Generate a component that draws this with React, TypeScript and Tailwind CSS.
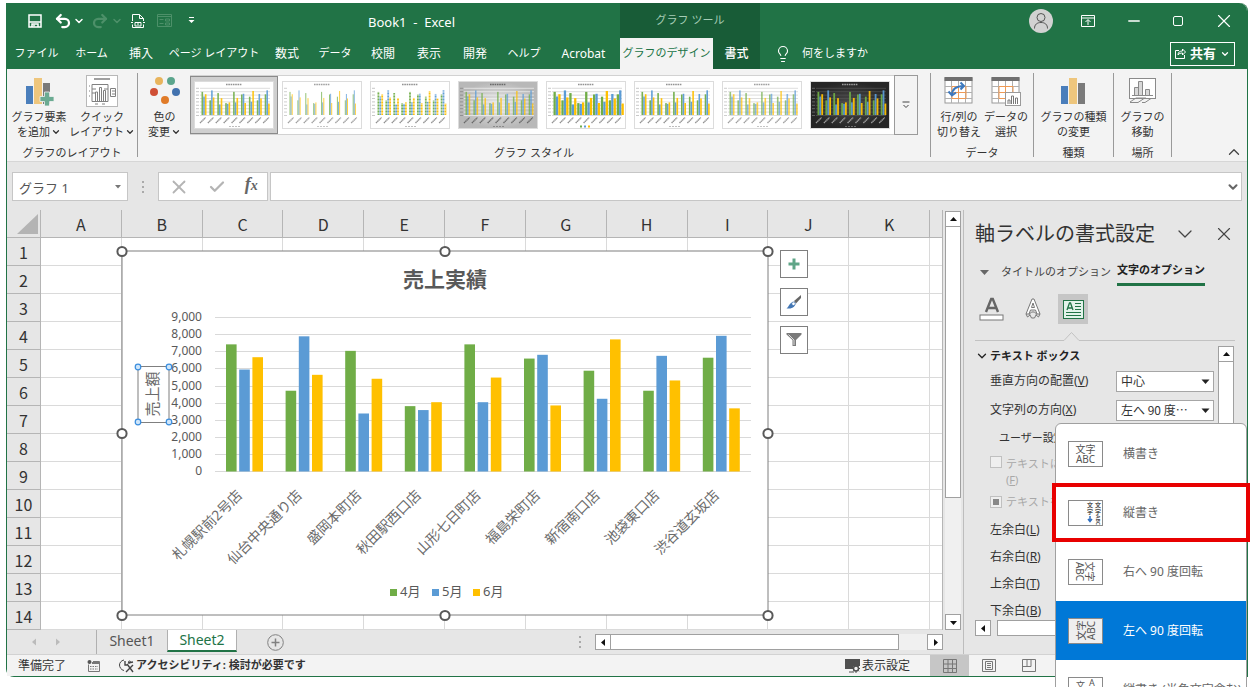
import React, { useState } from 'react';
import { ChevronDown, ChevronUp, Undo2, Redo2, X, Check, Minus, Lightbulb } from 'lucide-react';

type Store = {
  name: string;
  values: [number, number, number];
};

const stores: Store[] = [
  { name: '札幌駅前2号店', values: [7430, 5960, 6680] },
  { name: '仙台中央通り店', values: [4720, 7900, 5650] },
  { name: '盛岡本町店', values: [7050, 3390, 5420] },
  { name: '秋田駅西口店', values: [3820, 3590, 4050] },
  { name: '山形七日町店', values: [7430, 4050, 5490] },
  { name: '福島栄町店', values: [6600, 6820, 3860] },
  { name: '新宿南口店', values: [5890, 4250, 7720] },
  { name: '池袋東口店', values: [4720, 6760, 5320] },
  { name: '渋谷道玄坂店', values: [6650, 7930, 3690] },
];

const series = [
  { name: '4月', color: '#70ad47', x: 268 },
  { name: '5月', color: '#5b9bd5', x: 310 },
  { name: '6月', color: '#ffc000', x: 351 },
];

const menuTabs = [
  { label: 'ファイル', width: 'w-[57px] text-[11px]' },
  { label: 'ホーム', width: 'w-[53px] text-[11px]' },
  { label: '挿入', width: 'w-[46px] text-xs' },
  { label: 'ページ レイアウト', width: 'w-[100px] text-[11px]' },
  { label: '数式', width: 'w-[46px] text-xs' },
  { label: 'データ', width: 'w-[50px] text-[11px]' },
  { label: '校閲', width: 'w-[46px] text-xs' },
  { label: '表示', width: 'w-[46px] text-xs' },
  { label: '開発', width: 'w-[46px] text-xs' },
  { label: 'ヘルプ', width: 'w-[52px] text-[11px]' },
  { label: 'Acrobat', width: 'w-[67px] text-xs' },
];

const columns = ['A', 'B', 'C', 'D', 'E', 'F', 'G', 'H', 'I', 'J', 'K'];
const rows = Array.from({ length: 14 }, (_, i) => i + 1);

type ThumbStyle = {
  bg: string;
  grid: string;
  ink: string;
  barWidth: number;
  opacity: number;
  dashed?: boolean;
  legend?: boolean;
};

const thumbStyles: ThumbStyle[] = [
  { bg: '#ffffff', grid: '#cfcfcf', ink: '#777777', barWidth: 1.9, opacity: 0.9 },
  { bg: '#ffffff', grid: '#ffffff', ink: '#8a8a8a', barWidth: 1.3, opacity: 0.75 },
  { bg: '#ffffff', grid: '#ffffff', ink: '#777777', barWidth: 2.1, opacity: 0.95, dashed: true },
  { bg: 'url(#thumb-silver)', grid: '#f0f0f0', ink: '#555555', barWidth: 1.8, opacity: 0.75 },
  { bg: '#ffffff', grid: '#cccccc', ink: '#777777', barWidth: 2.6, opacity: 1, legend: true },
  { bg: '#ffffff', grid: '#d8d8d8', ink: '#777777', barWidth: 1.9, opacity: 0.95 },
  { bg: '#ffffff', grid: '#d0d0d0', ink: '#888888', barWidth: 1.9, opacity: 0.7 },
  { bg: 'url(#thumb-dark)', grid: '#555555', ink: '#bbbbbb', barWidth: 2.1, opacity: 0.95 },
];

function StyleThumb({ style }: { style: ThumbStyle }) {
  return (
    <svg viewBox="0 0 80 48" className="block h-12 w-20" aria-hidden="true">
      <defs>
        <radialGradient id="thumb-silver">
          <stop offset="0" stopColor="#e8e8e8" />
          <stop offset="1" stopColor="#b8b8b8" />
        </radialGradient>
        <radialGradient id="thumb-dark">
          <stop offset="0" stopColor="#4c4c4c" />
          <stop offset="1" stopColor="#262626" />
        </radialGradient>
      </defs>
      <rect x="0.5" y="0.5" width="79" height="47" fill={style.bg} stroke="#dcdcdc" />
      <path d="M32 3.5h16" stroke={style.ink} strokeWidth="1.6" strokeDasharray="1.6 0.7" opacity="0.8" />
      {[0, 1, 2, 3, 4, 5, 6, 7, 8].map((n) => (
        <g key={n}>
          <path d={`M6 ${34.5 - n * 3.4}h70`} stroke={style.grid} strokeWidth="0.7" />
          <path d={`M2 ${34.5 - n * 3.4}h3`} stroke={style.ink} strokeWidth="0.8" opacity="0.5" />
        </g>
      ))}
      {stores.map((store, i) => (
        <g key={store.name}>
          {store.values.map((value, k) => {
            const height = (value / 9000) * 28;
            return (
              <rect
                key={k}
                x={7.5 + i * 7.9 + k * (style.barWidth - 0.2)}
                y={34 - height}
                width={style.barWidth - 0.3}
                height={height}
                fill={series[k].color}
                opacity={style.opacity}
              />
            );
          })}
          <path d={`M${6 + i * 7.9} 42l5.5-5.5`} stroke={style.ink} strokeWidth="1.4" strokeDasharray="1.4 0.4" opacity="0.8" />
        </g>
      ))}
      {style.dashed &&
        [0, 1, 2, 3, 4, 5, 6, 7, 8].map((n) => (
          <path key={n} d={`M6 ${32 - n * 3}h70`} stroke="#ffffff" strokeWidth="0.8" />
        ))}
      {style.legend ? (
        <g>
          <rect x="34" y="44.5" width="2" height="2" fill="#70ad47" />
          <rect x="38" y="44.5" width="2" height="2" fill="#5b9bd5" />
          <rect x="42" y="44.5" width="2" height="2" fill="#ffc000" />
        </g>
      ) : (
        <path d="M35 45.5h11" stroke={style.ink} strokeWidth="0.8" strokeDasharray="2 1" opacity="0.6" />
      )}
    </svg>
  );
}

function SalesChart() {
  const handles = [
    [0, 0], [323, 0], [646, 0], [0, 182], [646, 182], [0, 364], [323, 364], [646, 364],
  ];
  const axisHandles = [[16, 116], [47, 116], [16, 171], [47, 171]];

  return (
    <svg
      viewBox="0 0 646 364"
      className="block h-[364px] w-[646px] overflow-visible font-['Noto_Sans','Noto_Sans_CJK_JP',sans-serif]"
      role="img"
      aria-label="売上実績"
    >
      <rect x="0" y="0" width="646" height="364" fill="#ffffff" stroke="#7f7f7f" />
      <text x="323" y="36" textAnchor="middle" fontSize="21" fontWeight="700" fill="#595959">売上実績</text>

      {Array.from({ length: 10 }, (_, n) => {
        const y = Math.round(220 - n * 17.1);
        return (
          <g key={n}>
            <path d={`M93 ${y + 0.5}h536`} stroke="#d9d9d9" />
            <text x="80" y={y + 4} textAnchor="end" fontSize="12" fill="#595959">
              {n === 0 ? '0' : `${n},000`}
            </text>
          </g>
        );
      })}

      {stores.map((store, i) => {
        const left = 104 + i * 59.6;
        return (
          <g key={store.name}>
            {store.values.map((value, k) => {
              const height = (value / 9000) * 154;
              return (
                <rect key={k} x={left + k * 13.2} y={220.5 - height} width="10.6" height={height} fill={series[k].color} />
              );
            })}
            <text
              x={left + 17}
              y="245"
              textAnchor="end"
              fontSize="14"
              fill="#6b6b6b"
              transform={`rotate(-45 ${left + 17} 245)`}
            >
              {store.name}
            </text>
          </g>
        );
      })}

      {series.map((item) => (
        <g key={item.name}>
          <rect x={item.x} y="338" width="7" height="7" fill={item.color} />
          <text x={item.x + 10} y="345" fontSize="13" fill="#595959">{item.name}</text>
        </g>
      ))}

      <rect x="16" y="115.5" width="31" height="56" fill="none" stroke="#7f7f7f" />
      <text x="36" y="143" textAnchor="middle" fontSize="15" fill="#6b6b6b" transform="rotate(-90 36 143)">売上額</text>
      {axisHandles.map(([x, y]) => (
        <circle key={`${x}-${y}`} cx={x} cy={y} r="2.8" fill="#cfe6fa" stroke="#3b8ede" strokeWidth="1.2" />
      ))}
      {handles.map(([x, y]) => (
        <circle key={`${x}-${y}`} cx={x} cy={y + 0.5} r="4.6" fill="#ffffff" stroke="#595959" strokeWidth="2" />
      ))}
    </svg>
  );
}

function RibbonButton({ icon, lines, arrow, width }: { icon: React.ReactNode; lines: [string, string]; arrow?: boolean; width: string }) {
  return (
    <button className={`flex shrink-0 flex-col items-center text-[11px] leading-[15px] whitespace-nowrap text-[#333] ${width}`}>
      <span className="mb-0.5 flex h-8 items-center">{icon}</span>
      <span>{lines[0]}</span>
      <span className="flex items-center">
        {lines[1]}
        {arrow && <ChevronDown className="ml-px size-2.5" strokeWidth={3} />}
      </span>
    </button>
  );
}

function RibbonGroup({ label, width, children }: { label: string; width: string; children: React.ReactNode }) {
  return (
    <>
      <div className={`flex shrink-0 flex-col pt-1.5 ${width}`}>
        <div className="flex flex-1 justify-center">{children}</div>
        <div className="flex h-[15px] items-center justify-center text-[11px] whitespace-nowrap text-[#333]">{label}</div>
      </div>
      <div className="my-1 w-px shrink-0 bg-[#9a9a9a]"></div>
    </>
  );
}

function BarsIcon({ plus }: { plus?: boolean }) {
  return (
    <svg width="30" height="30" viewBox="0 0 30 30">
      <rect x="2" y="10" width="7" height="18" fill="#4a7ebb" />
      <rect x="10" y="2" width="8" height="26" fill="#eec67d" />
      <rect x="19" y="7" width="7" height="21" fill="#7a7a7a" />
      {plus && (
        <path d="M20.500 16h5v4.500h4.500v5h-4.500V30h-5v-4.500H16v-5h4.500z" fill="#6bab92" stroke="#f3f3f3" strokeWidth="0.800" />
      )}
    </svg>
  );
}

function QuickLayoutIcon() {
  return (
    <svg width="32" height="32" viewBox="0 0 32 32" fill="none" stroke="#808080">
      <rect x="0.500" y="0.500" width="31" height="31" fill="#fff" stroke="#b8b8b8" />
      <path d="M8 4h16" stroke="#a0a0a0" strokeWidth="2" />
      <path d="M6 9.500h16M6 9.500v17h16v-17M6 14h4M18 14h4M6 18h3M3 11h1M3 16h1M3 21h1" />
      <path d="M9.500 26v-9h2v9M13.500 26V12.500h2V26M17.500 26V15.500h2V26" />
      <path d="M24.500 13.500h5v8h-5zM26 16h3M26 19h3M9 29h3M16 29h3" />
    </svg>
  );
}

function ColorsIcon() {
  return (
    <svg width="30" height="30" viewBox="0 0 30 30">
      <circle cx="9" cy="5" r="4" fill="#e8b45c" />
      <circle cx="21" cy="5" r="4" fill="#5ba58c" />
      <circle cx="4" cy="16" r="4" fill="#cf4f35" />
      <circle cx="26" cy="16" r="4" fill="#4272ae" />
      <circle cx="15" cy="24" r="4" fill="#e07b28" />
    </svg>
  );
}

function TableIcon({ variant }: { variant: 'swap' | 'select' }) {
  return (
    <svg width="30" height="30" viewBox="0 0 30 30" fill="none">
      <rect x="1" y="2" width="27" height="25" fill="#fff" stroke="#9a9a9a" />
      <rect x="0.500" y="1" width="28" height="4" fill="#6f6f6f" />
      <path d="M1 10.500h27M1 16.500h27M1 22.500h27M7.500 5v22M14.500 5v22M21.500 5v22" stroke="#b0b0b0" />
      <path d="M8 10.500h14v12H8zM8 16.500h14M14.500 10v12" stroke="#ef9a55" />
      {variant === 'swap' ? (
        <path
          d="M8 19c0-6 4-9 12-9M16.500 6.500 20 10l-3.500 3.500M4.500 15.500 8 19.500l4-3"
          stroke="#3d78bd"
          strokeWidth="2"
        />
      ) : (
        <g>
          <rect x="14.500" y="16.500" width="15" height="13" fill="#fff" stroke="#9a9a9a" />
          <path d="M17 28v-4h2v4M20.500 28v-8h2v8M24.500 28v-6h2v6" stroke="#777" />
        </g>
      )}
    </svg>
  );
}

function MoveChartIcon() {
  return (
    <svg width="30" height="30" viewBox="0 0 30 30" fill="none" stroke="#8a8a8a">
      <rect x="1.500" y="2.500" width="26" height="20" fill="#fff" />
      <path d="M6.500 19.500v-8h4v8zM10.500 19.500v-14h4v14zM17.500 19.500v-6h4v6z" fill="#d8d8d8" />
      <path d="M4 19.500h21M2 26l6-4h10M10 26.500l6-4M14 26.500h3l6-4M2 26.500h8" />
    </svg>
  );
}

function Ribbon() {
  return (
    <div className="flex h-[92px] shrink-0 bg-[#f3f3f3]">
      <RibbonGroup label="グラフのレイアウト" width="w-[130px]">
        <RibbonButton width="w-[60px]" icon={<BarsIcon plus />} lines={['グラフ要素', 'を追加']} arrow />
        <RibbonButton width="w-[66px]" icon={<QuickLayoutIcon />} lines={['クイック', 'レイアウト']} arrow />
      </RibbonGroup>

      <RibbonGroup label="グラフ スタイル" width="w-[792px]">
        <RibbonButton width="w-[50px]" icon={<ColorsIcon />} lines={['色の', '変更']} arrow />
        <div className="flex h-[60px] border-y border-[#d2d2d2] bg-white">
          {thumbStyles.map((style, i) => (
            <button
              key={i}
              aria-label={`スタイル ${i + 1}`}
              className={
                i === 0
                  ? 'flex w-[88px] items-center justify-center border border-[#8a8a8a] bg-[#cfcfcf]'
                  : 'flex w-[88px] items-center justify-center'
              }
            >
              <StyleThumb style={style} />
            </button>
          ))}
        </div>
        <button aria-label="その他のスタイル" className="flex h-[60px] w-6 items-center justify-center border border-[#9a9a9a] bg-[#f3f3f3]">
          <svg width="8" height="8" viewBox="0 0 8 8" fill="none" stroke="#444">
            <path d="M0.500 1h7M1.500 4l2.500 2.500L6.500 4" />
          </svg>
        </button>
        <div className="w-[11px]"></div>
      </RibbonGroup>

      <RibbonGroup label="データ" width="w-[102px]">
        <RibbonButton width="w-[48px]" icon={<TableIcon variant="swap" />} lines={['行/列の', '切り替え']} />
        <RibbonButton width="w-[46px]" icon={<TableIcon variant="select" />} lines={['データの', '選択']} />
      </RibbonGroup>
      <RibbonGroup label="種類" width="w-[79px]">
        <RibbonButton width="w-[70px]" icon={<BarsIcon />} lines={['グラフの種類', 'の変更']} />
      </RibbonGroup>
      <RibbonGroup label="場所" width="w-[57px]">
        <RibbonButton width="w-[50px]" icon={<MoveChartIcon />} lines={['グラフの', '移動']} />
      </RibbonGroup>
      <div className="flex flex-1 items-end justify-end pr-1">
        <button aria-label="リボンを折りたたむ"><ChevronUp className="size-[18px] text-[#444]" strokeWidth={1.75} /></button>
      </div>
    </div>
  );
}

function TitleBar() {
  return (
    <header className="flex h-[66px] shrink-0 rounded-tr-lg bg-[#217346] text-white">
      <div className="flex w-[613px] flex-col">
        <div className="flex h-[35px] items-center pl-[21px]">
          <button aria-label="上書き保存">
            <svg width="14" height="14" viewBox="0 0 14 14" fill="none" stroke="#fff" strokeWidth="1.500">
              <path d="M1 1h12v12H1zM1 8h12M4 13v-3h6v3" />
              <path d="M6 10.500v2" />
            </svg>
          </button>
          <button aria-label="元に戻す" className="ml-3"><Undo2 className="size-[18px]" strokeWidth={3} /></button>
          <ChevronDown className="ml-px size-3" strokeWidth={3} />
          <button aria-label="やり直し" className="ml-1.5 text-[#4d9069]"><Redo2 className="size-[18px]" strokeWidth={3} /></button>
          <ChevronDown className="ml-0.5 size-3 text-[#4d9069]" strokeWidth={3} />
          <button aria-label="印刷プレビュー" className="ml-2">
            <svg width="14" height="16" viewBox="0 0 14 16" fill="none" stroke="#fff">
              <path d="M1.500 8V1.500h7l4 4V8M8.500 1.500v4h4M1.500 14.500v-3M12.500 14.500v-3M1.500 14.500h11" />
              <path d="M0 9.500h2M12 9.500h2M4 9.500h6v3.500H4z" />
              <path d="M6 11h2" />
            </svg>
          </button>
          <button aria-label="フォーム" className="ml-3">
            <svg width="15" height="13" viewBox="0 0 15 13" fill="none" stroke="#4d9069">
              <path d="M0.500 0.500h14v12H0.500zM0 2.500h15M2.500 5.500h4M2.500 9.500h4M8.500 5h4v2h-4zM8.500 9h4v2h-4z" />
            </svg>
          </button>
          <button aria-label="クイック アクセス ツール バーのユーザー設定" className="ml-4">
            <svg width="7" height="7" viewBox="0 0 7 7" fill="#fff"><path d="M1 0h5v1H1zM0.500 3h6L3.500 6z" /></svg>
          </button>
          <div className="flex-1 pt-1 pl-2 text-center text-[13px] whitespace-pre">Book1  -  Excel</div>
        </div>
        <nav className="flex h-[31px] pl-px">
          {menuTabs.map((tab) => (
            <button key={tab.label} className={`text-center whitespace-nowrap ${tab.width}`}>
              {tab.label}
            </button>
          ))}
        </nav>
      </div>

      <div className="flex w-[140px] flex-col bg-[#185c37]">
        <div className="flex h-[35px] items-center justify-center text-[11px] text-[#a6cdb6]">グラフ ツール</div>
        <div className="flex h-[31px] whitespace-nowrap">
          <button className="w-[93px] bg-[#f3f3f3] text-[11px] text-[#217346]">グラフのデザイン</button>
          <button className="flex-1 text-xs font-medium">書式</button>
        </div>
      </div>

      <div className="flex flex-1 flex-col">
        <div className="flex h-[35px] items-center justify-end pr-3">
          <button aria-label="アカウント" className="flex size-6 items-center justify-center rounded-full bg-[#d2d2d2]">
            <svg width="16" height="16" viewBox="0 0 16 16" fill="none" stroke="#555">
              <circle cx="8" cy="4.500" r="4" />
              <path d="M1.500 15.500c0-4 2.500-6 6.500-6s6.500 2 6.500 6" />
            </svg>
          </button>
          <button aria-label="リボンの表示オプション" className="ml-7">
            <svg width="14" height="12" viewBox="0 0 14 12" fill="none" stroke="#fff">
              <path d="M0.500 0.500h13v11H0.500zM0 3h14M7 10V5M4.500 7 7 4.500 9.500 7" />
            </svg>
          </button>
          <button aria-label="最小化" className="ml-[30px]"><Minus className="size-[18px]" strokeWidth={1.75} /></button>
          <button aria-label="最大化" className="ml-[30px]"><span className="block size-2.5 rounded-xs border border-white"></span></button>
          <button aria-label="閉じる" className="ml-[30px]"><X className="size-[22px]" strokeWidth={1.25} /></button>
        </div>
        <div className="flex h-[31px] items-center justify-between pr-3 pl-3.5">
          <button className="flex items-center text-[11px]">
            <Lightbulb className="mr-2.5 size-[18px]" strokeWidth={1.5} />何をしますか
          </button>
          <button className="flex h-6 items-center border border-white px-1 text-[13px] font-bold">
            <svg width="11" height="11" viewBox="0 0 11 11" className="mr-1" fill="none" stroke="#fff">
              <path d="M4 2.500H0.500v8h9V7" />
              <path d="M3 7c0-3 2-4 4.500-4V1l3 3-3 3V5C5.500 5 4 5.500 3 7z" />
            </svg>
            共有
            <ChevronDown className="ml-1 size-2.5" strokeWidth={3} />
          </button>
        </div>
      </div>
    </header>
  );
}

function FormulaBar() {
  return (
    <div className="flex h-[49px] shrink-0 items-start border-t border-[#d6d6d6] px-[5px] pt-2.5">
      <label className="flex h-[29px] w-[116px] items-center border border-[#c6c6c6] bg-white pr-1.5 pl-1.5">
        <input aria-label="名前ボックス" defaultValue="グラフ 1" className="min-w-0 flex-1 pt-1 text-[13px] text-[#555] outline-none" />
        <svg width="6" height="4" viewBox="0 0 6 4" fill="#777"><path d="M0 0h6L3 3.500z" /></svg>
      </label>
      <div className="flex h-[29px] w-[30px] flex-col items-center justify-center gap-[3px]">
        <span className="size-0.5 bg-[#aaa]"></span>
        <span className="size-0.5 bg-[#aaa]"></span>
        <span className="size-0.5 bg-[#aaa]"></span>
      </div>
      <div className="flex h-[29px] w-[110px] items-center justify-around border border-[#c6c6c6] bg-white text-[#b4b4b4]">
        <button aria-label="キャンセル"><X className="size-[22px]" /></button>
        <button aria-label="入力"><Check className="size-[18px]" strokeWidth={3} /></button>
        <button aria-label="関数の挿入" className="pb-1 font-['Liberation_Serif',serif] text-lg leading-5 font-bold text-[#666] italic">
          f<span className="text-sm">x</span>
        </button>
      </div>
      <div className="ml-[2px] flex h-[29px] flex-1 items-center border border-[#c6c6c6] bg-white pr-px">
        <input aria-label="数式バー" className="min-w-0 flex-1 outline-none" />
        <ChevronDown className="size-3.5 text-[#666]" strokeWidth={3.5} />
      </div>
    </div>
  );
}

function ScrollArrow({ direction, className }: { direction: 'up' | 'down' | 'left' | 'right'; className?: string }) {
  const paths = {
    up: 'M1 6h7L4.500 2z',
    down: 'M1 3h7L4.500 7z',
    left: 'M6 1v7L2 4.500z',
    right: 'M3 1v7l4-3.500z',
  };
  return (
    <button aria-label={direction} className={`flex size-4 shrink-0 items-center justify-center border border-[#a0a0a0] bg-white ${className ?? ''}`}>
      <svg width="9" height="9" viewBox="0 0 9 9" fill="#111"><path d={paths[direction]} /></svg>
    </button>
  );
}

function Worksheet() {
  return (
    <div className="flex">
      <div className="relative min-w-0 flex-1 border-r border-[#b5b5b5]">
        <table className="w-full table-fixed border-separate border-spacing-0 bg-white font-['Noto_Sans_CJK_JP',sans-serif] text-base leading-none text-[#333]">
          <colgroup>
            <col className="w-[34px]" />
            {columns.map((column) => <col key={column} />)}
            <col className="w-3" />
          </colgroup>
          <thead>
            <tr className="h-7 bg-[#e6e6e6]">
              <th className="border-r border-b border-[#b5b5b5] p-0">
                <svg width="22" height="20" viewBox="0 0 22 20" className="ml-2.5"><path d="M21 0v20H0z" fill="#b4b4b4" /></svg>
              </th>
              {columns.map((column) => (
                <th key={column} className="border-r border-b border-[#b5b5b5] p-0 font-normal">{column}</th>
              ))}
              <th className="border-b border-[#b5b5b5] p-0"></th>
            </tr>
          </thead>
          <tbody>
            {rows.map((row) => (
              <tr key={row} className="h-7">
                <th className="border-r border-b border-[#b5b5b5] bg-[#e6e6e6] p-0 font-normal">{row}</th>
                {columns.map((column) => (
                  <td key={column} className="border-r border-b border-[#dadada] p-0"></td>
                ))}
                <td className="border-b border-[#dadada] p-0"></td>
              </tr>
            ))}
          </tbody>
        </table>

        <div className="absolute top-[41px] left-[115px] flex gap-3">
          <SalesChart />
          <div className="-mt-px flex flex-col gap-[10px]">
            <button aria-label="グラフ要素" className="flex size-7 items-center justify-center border border-[#7f7f7f] bg-white">
              <svg width="12" height="12" viewBox="0 0 12 12"><path d="M4.500 0.500h3v4h4v3h-4v4h-3v-4h-4v-3h4z" fill="#5fa587" /></svg>
            </button>
            <button aria-label="グラフ スタイル" className="flex size-7 items-center justify-center border border-[#7f7f7f] bg-white">
              <svg width="16" height="16" viewBox="0 0 16 16">
                <path d="M15 1 8 7l2 2.500L15 4z" fill="#666" />
                <path d="M0.500 14.500C3 13 3 9 6.500 8.500L9 11c-1 3-5 4-8.500 3.500z" fill="#4377b5" />
                <circle cx="7.500" cy="9.800" r="1.800" fill="#fff" stroke="#4377b5" strokeWidth="0.800" />
              </svg>
            </button>
            <button aria-label="グラフ フィルター" className="flex size-7 items-center justify-center border border-[#7f7f7f] bg-white">
              <svg width="16" height="16" viewBox="0 0 16 16"><path d="M0.500 1h15v1.500L10 8v6H6.500V8L0.500 2.500z" fill="#7a7a7a" /><path d="M2.500 2.500 8 8v5" fill="none" stroke="#ddd" /></svg>
            </button>
          </div>
        </div>
      </div>
      <div className="flex w-5 flex-col items-center pt-px">
        <ScrollArrow direction="up" />
        <div className="h-[271px] w-4 border-x border-b border-[#a0a0a0] bg-white"></div>
        <div className="w-4 flex-1 bg-[#f0f0f0]"></div>
        <ScrollArrow direction="down" />
      </div>
    </div>
  );
}

function SheetTabs() {
  return (
    <div className="flex h-6 shrink-0 items-start text-sm text-[#555]">
      <div className="flex h-6 w-[90px] items-center justify-center gap-[18px] border-r border-[#b0b0b0] pr-3">
        <svg width="6" height="8" viewBox="0 0 6 8" fill="#bbb"><path d="M5 0.500v7L1 4z" /></svg>
        <svg width="6" height="8" viewBox="0 0 6 8" fill="#bbb"><path d="M1 0.500v7L5 4z" /></svg>
      </div>
      <button className="h-[22px] w-[70px] leading-5">Sheet1</button>
      <button className="h-[22px] w-[70px] border-x border-b-2 border-x-[#b0b0b0] border-b-[#217346] bg-white leading-5 text-[#217346]">Sheet2</button>
      <button aria-label="新しいシート" className="ml-[30px] flex h-6 items-center">
        <svg width="17" height="17" viewBox="0 0 17 17" fill="none" stroke="#808080">
          <circle cx="8.500" cy="8.500" r="7.800" />
          <path d="M8.500 4.500v8M4.500 8.500h8" strokeWidth="1.500" />
        </svg>
      </button>
      <div className="flex-1"></div>
      <div className="mr-3.5 flex h-6 flex-col items-center justify-center gap-[3px]">
        <span className="size-0.5 bg-[#aaa]"></span>
        <span className="size-0.5 bg-[#aaa]"></span>
        <span className="size-0.5 bg-[#aaa]"></span>
      </div>
      <div className="mt-1 mr-5 flex w-[348px]">
        <ScrollArrow direction="left" />
        <div className="h-4 flex-1 border-y border-r border-[#a0a0a0] bg-white"></div>
        <div className="h-4 w-7 bg-[#f0f0f0]"></div>
        <ScrollArrow direction="right" />
      </div>
    </div>
  );
}

function SelectField({ id, value }: { id: string; value: string }) {
  return (
    <span className="relative flex w-[98px]">
      <select
        id={id}
        defaultValue={value}
        className="h-[21px] w-full appearance-none border border-[#a6a6a6] bg-white px-1 font-['Noto_Sans_CJK_JP',sans-serif] text-xs text-[#333]"
      >
        <option>{value}</option>
      </select>
      <svg width="9" height="6" viewBox="0 0 9 6" className="pointer-events-none absolute top-2 right-1"><path d="M0.500 0.500h8L4.500 5z" fill="#222" /></svg>
    </span>
  );
}

const margins = [
  { id: 'margin-left', label: '左余白', accessKey: 'L' },
  { id: 'margin-right', label: '右余白', accessKey: 'R' },
  { id: 'margin-top', label: '上余白', accessKey: 'T' },
  { id: 'margin-bottom', label: '下余白', accessKey: 'B' },
];

function FormatPane() {
  return (
    <aside className="flex h-full flex-col border-l border-[#bdbdbd] pl-[11px] whitespace-nowrap">
      <div className="flex h-12 items-center pr-3">
        <h2 className="flex-1 text-xl text-[#333]">軸ラベルの書式設定</h2>
        <button aria-label="作業ウィンドウ オプション" className="mr-4"><ChevronDown className="size-6 text-[#444]" strokeWidth={1.25} /></button>
        <button aria-label="閉じる"><X className="size-[22px] text-[#444]" strokeWidth={1.25} /></button>
      </div>
      <div className="flex h-7 items-center text-[11px] text-[#444]">
        <svg width="9" height="5" viewBox="0 0 9 5" className="mr-3 ml-[5px]" fill="#666"><path d="M0 0h9L4.500 5z" /></svg>
        <button className="w-[116px] text-left">タイトルのオプション</button>
        <button className="h-7 w-[88px] border-b-[3px] border-[#217346] font-bold text-[#222]">文字のオプション</button>
      </div>
      <div className="mt-2 flex items-center">
        <button aria-label="文字の塗りつぶしと輪郭" className="flex w-[34px] justify-center">
          <svg width="26" height="24" viewBox="0 0 26 24">
            <path d="M7 15 12.200 2h1.600L19 15M9 11h8" fill="none" stroke="#666" strokeWidth="2.400" />
            <rect x="1" y="18" width="23" height="5" fill="#fff" stroke="#777" />
          </svg>
        </button>
        <button aria-label="文字の効果" className="flex w-12 justify-center">
          <svg width="18" height="24" viewBox="0 0 18 24" fill="none" stroke="#777">
            <path d="M2 17 8 2h2l6 15h-3l-1.500-4h-5L5 17zM7.500 10.500 9 6l1.500 4.500z" fill="#fff" />
            <path d="M2 17l1.500 3L6 18M16 17l-1.500 3L12 18M5.500 17l2-2h3l2 2-2 4h-3z" />
          </svg>
        </button>
        <button aria-label="テキスト ボックス" className="ml-px flex size-[30px] items-center justify-center bg-[#c6c6c6]">
          <svg width="21" height="19" viewBox="0 0 21 19" fill="none" stroke="#217346">
            <rect x="0.500" y="0.500" width="20" height="18" fill="#e2f3ea" />
            <path d="M4 10l2.500-7h1L10 10M5 8h4" strokeWidth="1.300" />
            <path d="M12 3.500h6M12 6.500h6M12 9.500h6M3 12.500h15M3 15.500h15" />
          </svg>
        </button>
      </div>
      <svg viewBox="0 0 260 16" className="mt-px block h-4 w-[260px]" fill="none" stroke="#c2c2c2"><path d="M0 15.500h89l7.500-8 7.500 8h156" /></svg>

      <div className="flex min-h-0 flex-1 pt-[5px]">
        <div className="w-[243px] overflow-hidden text-xs text-[#333]">
          <h3 className="flex h-5 items-center text-[11px] font-bold text-[#222]">
            <ChevronDown className="mr-px size-3.5" strokeWidth={2.25} />テキスト ボックス
          </h3>
          <div className="flex h-[30px] items-center justify-between pr-1 pl-[15px]">
            <label htmlFor="vertical-align">垂直方向の配置(<u>V</u>)</label>
            <SelectField id="vertical-align" value="中心" />
          </div>
          <div className="flex h-7 items-center justify-between pr-1 pl-[15px]">
            <label htmlFor="text-direction">文字列の方向(<u>X</u>)</label>
            <SelectField id="text-direction" value="左へ 90 度…" />
          </div>
          <div className="flex h-7 items-center pl-6 text-[11px]">ユーザー設定</div>
          <div className="flex h-9 items-start pt-1 pl-[15px] text-[11px] leading-4 text-[#a8a8a8]">
            <input id="fit-shape" type="checkbox" disabled className="mr-1 size-3 appearance-none border border-[#c0c0c0] bg-[#efefef]" />
            <label htmlFor="fit-shape">テキストに<br />(<u>F</u>)</label>
          </div>
          <div className="flex h-7 items-center pl-[15px] text-[11px] text-[#a8a8a8]">
            <input id="overflow-text" type="checkbox" disabled className="mr-1 size-3 appearance-none border border-[#c0c0c0] bg-[#888] shadow-[inset_0_0_0_2px_#efefef]" />
            <label htmlFor="overflow-text">テキストを</label>
          </div>
          {margins.map((margin) => (
            <div key={margin.id} className="flex h-[27px] items-center justify-between pr-1 pl-[15px]">
              <label htmlFor={margin.id}>{margin.label}(<u>{margin.accessKey}</u>)</label>
              <input id={margin.id} className="h-[21px] w-[98px] border border-[#a6a6a6] bg-white" />
            </div>
          ))}
        </div>
        <div className="flex w-4 flex-col">
          <ScrollArrow direction="up" />
          <div className="flex-1 border-x border-[#a0a0a0] bg-white"></div>
        </div>
      </div>
      <div className="mb-[18px] flex h-4">
        <ScrollArrow direction="left" />
        <div className="ml-1.5 w-[200px] border border-[#a0a0a0] bg-white"></div>
      </div>
    </aside>
  );
}

const directions = [
  { label: '横書き', kind: 'horizontal' },
  { label: '縦書き', kind: 'vertical' },
  { label: '右へ 90 度回転', kind: 'right' },
  { label: '左へ 90 度回転', kind: 'left' },
  { label: '縦書き (半角文字含む)', kind: 'stacked' },
];

function DirectionIcon({ kind }: { kind: string }) {
  const rotation = kind === 'right' ? 'rotate(90 17.5 12.5)' : kind === 'left' ? 'rotate(-90 17.5 12.5)' : undefined;
  return (
    <svg width="35" height="26" viewBox="0 0 35 26" className="shrink-0 font-['Noto_Sans','Noto_Sans_CJK_JP',sans-serif]" fill="#555">
      <rect x="0.500" y="0.500" width="34" height="25" fill={kind === 'left' ? '#efefef' : '#ffffff'} stroke="#8a8a8a" />
      {(kind === 'horizontal' || rotation) && (
        <g transform={rotation} textAnchor="middle" fontSize="10">
          <text x="17.5" y="12">文字</text>
          <text x="17.5" y="22">ABC</text>
        </g>
      )}
      {kind === 'vertical' && (
        <g fontSize="6" fontWeight="bold">
          <text x="19" y="7">文</text>
          <text x="19" y="14">字</text>
          <text x="27" y="7">文</text>
          <text x="27" y="14">字</text>
          <text x="28" y="15" fontSize="5" transform="rotate(90 28 15)">ABC</text>
          <path d="M22 16v5M20 19l2 2.500 2-2.500" fill="none" stroke="#2f6fc0" strokeWidth="1.500" />
        </g>
      )}
      {kind === 'stacked' && (
        <g fontSize="9">
          <text x="8" y="12">文</text>
          <text x="8" y="22">字</text>
          <text x="21" y="9">A</text>
          <text x="21" y="17">B</text>
          <text x="21" y="25">C</text>
        </g>
      )}
    </svg>
  );
}

function DirectionMenu() {
  const [selected, setSelected] = useState('left');

  return (
    <div className="absolute top-[213px] right-0 z-10 w-48 rounded-t-md border border-[#a0a0a0] bg-white" role="listbox" aria-label="文字列の方向">
      {directions.map((item) => (
        <div key={item.kind} className="relative">
          <button
            role="option"
            aria-selected={selected === item.kind}
            onClick={() => setSelected(item.kind)}
            className={`flex h-[59px] w-full items-center gap-5 pl-3 text-left text-xs whitespace-nowrap ${
              selected === item.kind ? 'bg-[#0078d7] text-white' : 'text-[#666]'
            }`}
          >
            <DirectionIcon kind={item.kind} />
            {item.label}
          </button>
          {item.kind === 'vertical' && (
            <div className="pointer-events-none absolute -inset-x-1 inset-y-0 z-10 border-4 border-[#e80000]"></div>
          )}
        </div>
      ))}
    </div>
  );
}

function StatusBar() {
  return (
    <footer className="flex h-[22px] shrink-0 items-center border-t border-[#d2d2d2] bg-[#f3f3f3] text-xs whitespace-nowrap text-[#333]">
      <span className="w-20 pl-[11px]">準備完了</span>
      <svg width="13" height="12" viewBox="0 0 13 12" fill="none" stroke="#777">
        <path d="M1.500 4.500v7h11V1.500H6" />
        <circle cx="2.500" cy="2" r="2" fill="#555" stroke="none" />
        <path d="M5 3h7" strokeWidth="2" />
        <path d="M3 6.500h8M3 9h8" strokeDasharray="1.500 1" />
      </svg>
      <button className="ml-[19px] flex items-center text-[11px] font-bold">
        <svg width="15" height="14" viewBox="0 0 15 14" className="mr-0.5" fill="none" stroke="#444">
          <path d="M5 1C2 1.500 0.500 4 0.500 6S2 11 5 11.500" />
          <path d="M6 2v4h2M8 5l6 8M14 6l-7 7M9 4l5-1" strokeWidth="1.400" />
          <circle cx="10.500" cy="3" r="1" />
        </svg>
        アクセシビリティ: 検討が必要です
      </button>
      <div className="flex-1"></div>
      <button className="mr-5 flex items-center">
        <svg width="16" height="14" viewBox="0 0 16 14" className="mr-px">
          <path d="M0 0h15v7H8v3H0z" fill="#505050" />
          <path d="M4 13h5" stroke="#505050" />
          <circle cx="11" cy="9.500" r="2.500" fill="#f3f3f3" stroke="#505050" strokeWidth="1.500" />
          <path d="M11 5.500v1.500M11 12v2M7 9.500h1.500M13.500 9.500H15M8 6.700l1 1M14 6.700l-1 1M8 12.300l1-1M14 12.300l-1-1" stroke="#505050" />
        </svg>
        表示設定
      </button>
      <button aria-label="標準" className="flex h-full w-[39px] items-center justify-center bg-[#c6c6c6]">
        <svg width="14" height="14" viewBox="0 0 14 14" fill="none" stroke="#777"><path d="M0.500 0.500h13v13H0.500zM5 0v14M9.500 0v14M0 5h14M0 9.500h14" /></svg>
      </button>
      <button aria-label="ページ レイアウト" className="flex h-full w-10 items-center justify-center">
        <svg width="14" height="13" viewBox="0 0 14 13" fill="none" stroke="#777"><path d="M0.500 0.500h13v12H0.500zM3.500 2.500h7v8h-7zM5 4.500h4M5 6.500h4M5 8.500h4" /></svg>
      </button>
      <button aria-label="改ページ プレビュー" className="flex h-full w-10 items-center justify-center">
        <svg width="14" height="13" viewBox="0 0 14 13" fill="none" stroke="#777"><path d="M0.500 0.500h13v12H0.500zM0.500 7.500h8.500v-7M5 0.500v7" /></svg>
      </button>
      <div className="w-[198px]"></div>
    </footer>
  );
}

export default function App() {
  return (
    <div
      lang="ja"
      className="flex h-screen flex-col overflow-hidden bg-white pt-[3px] pr-1 pb-[10px] pl-1.5 font-['Noto_Sans','Noto_Sans_CJK_JP',sans-serif]"
    >
      <div className="flex min-h-0 flex-1 flex-col rounded-tr-lg rounded-bl-lg border-x border-b border-[#217346] bg-[#e6e6e6]">
        <TitleBar />
        <Ribbon />
        <FormulaBar />
        <main className="relative flex min-h-0 flex-1">
          <div className="flex min-w-0 flex-1 flex-col">
            <Worksheet />
            <SheetTabs />
          </div>
          <div className="w-[284px] shrink-0">
            <FormatPane />
          </div>
          <DirectionMenu />
        </main>
        <StatusBar />
      </div>
    </div>
  );
}
